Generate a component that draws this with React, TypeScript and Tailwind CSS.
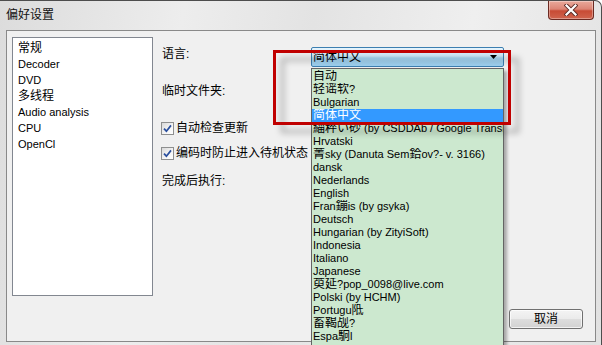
import React from "react";

const CJK = /([\u3000-\u9fff\uff00-\uffef]+)/;

function Mixed({ text }: { text: string }) {
  const parts = text.split(CJK);
  return (
    <>
      {parts.map((p, i) =>
        CJK.test(p) ? (
          <span key={i} className="text-[12px]">
            {p}
          </span>
        ) : (
          <span key={i}>{p}</span>
        )
      )}
    </>
  );
}

const langs = [
  "自动",
  "轻谣软?",
  "Bulgarian",
  "简体中文",
  "緇粹い砂 (by CSDDAb / Google Translation)",
  "Hrvatski",
  "菁sky (Danuta Sem鉿ov?- v. 3166)",
  "dansk",
  "Nederlands",
  "English",
  "Fran鏰is (by gsyka)",
  "Deutsch",
  "Hungarian (by ZityiSoft)",
  "Indonesia",
  "Italiano",
  "Japanese",
  "萸延?pop_0098@live.com",
  "Polski (by HCHM)",
  "Portugu阺",
  "畜鞨觇?",
  "Espa駉l",
  "Svenska",
];

const navItems = ["常规", "Decoder", "DVD", "多线程", "Audio analysis", "CPU", "OpenCl"];

function Check() {
  return (
    <span className="w-[13px] h-[13px] shrink-0 border border-[#8e8f8f] bg-[linear-gradient(135deg,#d9d9d9,#f6f6f6_60%,#ffffff)] flex items-center justify-center">
      <svg width="9" height="9" viewBox="0 0 9 9">
        <path d="M1 4.6 L3.4 7.2 L8 1.4" stroke="#2a4f9e" strokeWidth="1.7" fill="none" />
      </svg>
    </span>
  );
}

export default function App() {
  return (
    <div className="relative w-[602px] h-[345px] overflow-hidden border-t border-r border-[#4d4d4d] rounded-tr-[7px] bg-[linear-gradient(100deg,#dcdcdc_0%,#ededed_28%,#e3e3e3_48%,#efefef_72%,#e1e1e1_100%)] font-['Liberation_Sans','Noto_Sans_CJK_SC',sans-serif] text-black text-[11px]">
      {/* title bar */}
      <div className="h-[29px] flex items-start">
        <div className="pl-[6px] pt-[7px] text-[12px] leading-[14px] text-[#111]">偏好设置</div>
        <div className="ml-auto mr-[7px] w-[46px] h-[19px] rounded-b-[4px] border border-t-0 border-[#6b2a22] bg-[linear-gradient(to_bottom,#e9a99b_0%,#dc8575_45%,#c84b35_55%,#d0644e_100%)] flex items-center justify-center shadow-[inset_0_0_0_1px_rgba(255,255,255,0.35)]">
          <svg width="14" height="12" viewBox="0 0 14 12">
            <path d="M2.5 1.5 L11.5 10.5 M11.5 1.5 L2.5 10.5" stroke="#5a2a25" strokeWidth="4" strokeLinecap="square" />
            <path d="M2.5 1.5 L11.5 10.5 M11.5 1.5 L2.5 10.5" stroke="#ffffff" strokeWidth="2.2" strokeLinecap="square" />
          </svg>
        </div>
      </div>

      {/* main panel */}
      <div className="ml-[6px] w-[590px] h-[312px] border border-[#898989] bg-[#f0f0f0] flex">
        {/* nav list */}
        <div className="ml-[5px] mt-[6px] w-[141px] h-[259px] border border-[#828790] bg-white pt-[2px]">
          {navItems.map((n) => (
            <div key={n} className="h-[16px] leading-[16px] pl-[5px]">
              <Mixed text={n} />
            </div>
          ))}
        </div>

        {/* right column */}
        <div className="ml-[9px] flex-1 flex flex-col text-[12px]">
          <div className="mt-[16px] h-[20px] flex items-start">
            <div className="w-[149px] leading-[14px]">语言:</div>
            <div className="w-[193px] h-[20px] border border-[#3c7fb1] rounded-[2px] bg-[linear-gradient(to_bottom,#e6f4fc_0%,#cfeafa_45%,#aadaf5_55%,#9ccfef_100%)] flex items-center pl-[1px] pr-[6px]">
              <span className="leading-[14px]">简体中文</span>
              <svg className="ml-auto" width="7" height="4" viewBox="0 0 7 4">
                <path d="M0 0 H7 L3.5 4 Z" fill="#000" />
              </svg>
            </div>
          </div>
          <div className="mt-[17px] leading-[14px]">临时文件夹:</div>
          <div className="mt-[23px] h-[14px] flex items-center ml-[-1px] gap-[2px]">
            <Check />
            <span className="leading-[14px]">自动检查更新</span>
          </div>
          <div className="mt-[11px] h-[14px] flex items-center ml-[-1px] gap-[2px]">
            <Check />
            <span className="leading-[14px]">编码时防止进入待机状态</span>
          </div>
          <div className="mt-[14px] leading-[14px]">完成后执行:</div>
          <div className="mt-auto mb-[12px] mr-[12px] flex justify-end">
            <button className="w-[74px] h-[20px] border border-[#707070] rounded-[3px] bg-[linear-gradient(to_bottom,#f4f4f4_0%,#ebebeb_48%,#dddddd_52%,#d2d2d2_100%)] text-[12px] leading-[14px] shadow-[inset_0_0_0_1px_rgba(255,255,255,0.7)]">
              取消
            </button>
          </div>
        </div>
      </div>

      {/* dropdown list overlay */}
      <div className="absolute left-[311px] top-[67px] w-[193px] h-[300px] border border-[#646464] bg-[#cce8cf] pt-[1px] shadow-[3px_3px_3px_rgba(0,0,0,0.3)] overflow-hidden">
        {langs.map((l, i) => (
          <div
            key={i}
            className={
              i === 3
                ? "h-[13px] leading-[13px] pl-[1px] whitespace-nowrap overflow-hidden bg-[#3399ff] text-white"
                : "h-[13px] leading-[13px] pl-[1px] whitespace-nowrap overflow-hidden"
            }
          >
            <Mixed text={l} />
          </div>
        ))}
      </div>

      {/* red annotation rectangle */}
      <div className="absolute left-[273px] top-[49px] w-[238px] h-[75px] border-[3px] border-[#c00000] [filter:drop-shadow(8px_8px_3px_rgba(0,0,0,0.3))]" />
    </div>
  );
}
